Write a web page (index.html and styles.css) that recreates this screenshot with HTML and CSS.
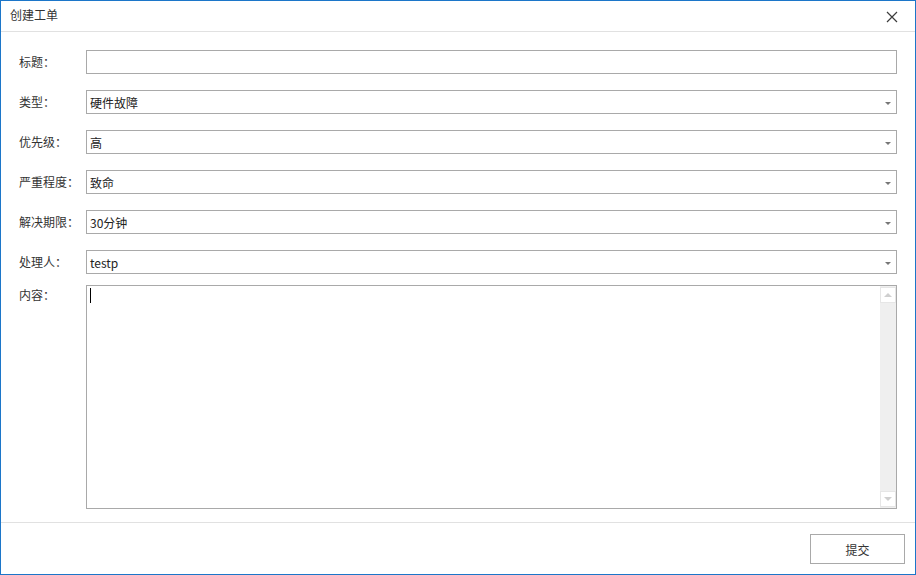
FILE: index.html
```html
<!DOCTYPE html>
<html lang="zh">
<head>
<meta charset="utf-8">
<title>创建工单</title>
<link rel="stylesheet" href="styles.css">
</head>
<body>
<div class="window">
  <div class="titlebar">
    <span class="title">创建工单</span>
    <svg class="close" width="12" height="12" viewBox="0 0 12 12"><path d="M1 1 L11 11 M11 1 L1 11" stroke="#3c3c3c" stroke-width="1.2" fill="none"/></svg>
  </div>
  <div class="form">
    <div class="row"><div class="label">标题：</div><div class="field"></div></div>
    <div class="row"><div class="label">类型：</div><div class="field combo"><span>硬件故障</span><i class="arrow"></i></div></div>
    <div class="row"><div class="label">优先级：</div><div class="field combo"><span>高</span><i class="arrow"></i></div></div>
    <div class="row"><div class="label">严重程度：</div><div class="field combo"><span>致命</span><i class="arrow"></i></div></div>
    <div class="row"><div class="label">解决期限：</div><div class="field combo"><span>30分钟</span><i class="arrow"></i></div></div>
    <div class="row"><div class="label">处理人：</div><div class="field combo"><span>testp</span><i class="arrow"></i></div></div>
    <div class="row area-row">
      <div class="label">内容：</div>
      <div class="textarea">
        <div class="text"><span class="caret"></span></div>
        <div class="scrollbar">
          <div class="sbtn"><i class="up"></i></div>
          <div class="track"></div>
          <div class="sbtn"><i class="down"></i></div>
        </div>
      </div>
    </div>
  </div>
  <div class="footer">
    <div class="button">提交</div>
  </div>
</div>
</body>
</html>
```
FILE: styles.css
```css
html, body {
  margin: 0;
  padding: 0;
  background: #fff;
}
body {
  font-family: "Noto Sans CJK SC", "Noto Sans", sans-serif;
  font-size: 12px;
  color: #333;
}
.window {
  box-sizing: border-box;
  width: 916px;
  height: 575px;
  border: 1px solid #1c76c9;
  display: flex;
  flex-direction: column;
  background: #fff;
}
.titlebar {
  height: 30px;
  border-bottom: 1px solid #e1e1e1;
  display: flex;
  align-items: center;
  justify-content: space-between;
  padding: 0 17px 0 9px;
}
.title {
  font-size: 12px;
  color: #333;
  line-height: 1;
  margin-top: -2px;
}
.close {
  display: block;
  margin-top: 1px;
}
.form {
  padding: 18px 18px 0 18px;
  display: flex;
  flex-direction: column;
  gap: 16px;
}
.row {
  display: flex;
  align-items: center;
}
.label {
  width: 67px;
  flex: none;
  color: #333;
  line-height: 24px;
}
.field {
  flex: 1;
  box-sizing: border-box;
  height: 24px;
  border: 1px solid #a9a9a9;
  display: flex;
  align-items: center;
  padding: 0 3px;
  color: #222;
}
.combo {
  justify-content: space-between;
}
.arrow {
  width: 0;
  height: 0;
  border-left: 3px solid transparent;
  border-right: 3px solid transparent;
  border-top: 3px solid #777;
  margin-right: 2px;
  margin-top: 2px;
}
.area-row {
  align-items: flex-start;
  margin-top: -5px;
}
.area-row .label {
  line-height: 18px;
  margin-top: 1px;
}
.textarea {
  flex: 1;
  box-sizing: border-box;
  height: 224px;
  border: 1px solid #a9a9a9;
  display: flex;
}
.text {
  flex: 1;
  padding: 2px 3px;
}
.caret {
  display: block;
  width: 1px;
  height: 15px;
  background: #000;
}
.scrollbar {
  width: 16px;
  flex: none;
  background: #efefef;
  display: flex;
  flex-direction: column;
  padding: 1px 0;
  box-sizing: border-box;
}
.track {
  flex: 1;
}
.sbtn {
  box-sizing: border-box;
  height: 16px;
  width: 16px;
  background: #fff;
  border: 1px solid #e6e6e6;
  display: flex;
  align-items: center;
  justify-content: center;
}
.up {
  width: 0;
  height: 0;
  border-left: 4px solid transparent;
  border-right: 4px solid transparent;
  border-bottom: 4px solid #cfcfcf;
}
.down {
  width: 0;
  height: 0;
  border-left: 4px solid transparent;
  border-right: 4px solid transparent;
  border-top: 4px solid #cfcfcf;
}
.footer {
  margin-top: 13px;
  border-top: 1px solid #e1e1e1;
  flex: 1;
  display: flex;
  justify-content: flex-end;
  align-items: flex-start;
  padding: 11px 10px 0 0;
}
.button {
  box-sizing: border-box;
  width: 95px;
  height: 30px;
  border: 1px solid #a9a9a9;
  display: flex;
  align-items: center;
  justify-content: center;
  color: #333;
  background: #fff;
}
```
